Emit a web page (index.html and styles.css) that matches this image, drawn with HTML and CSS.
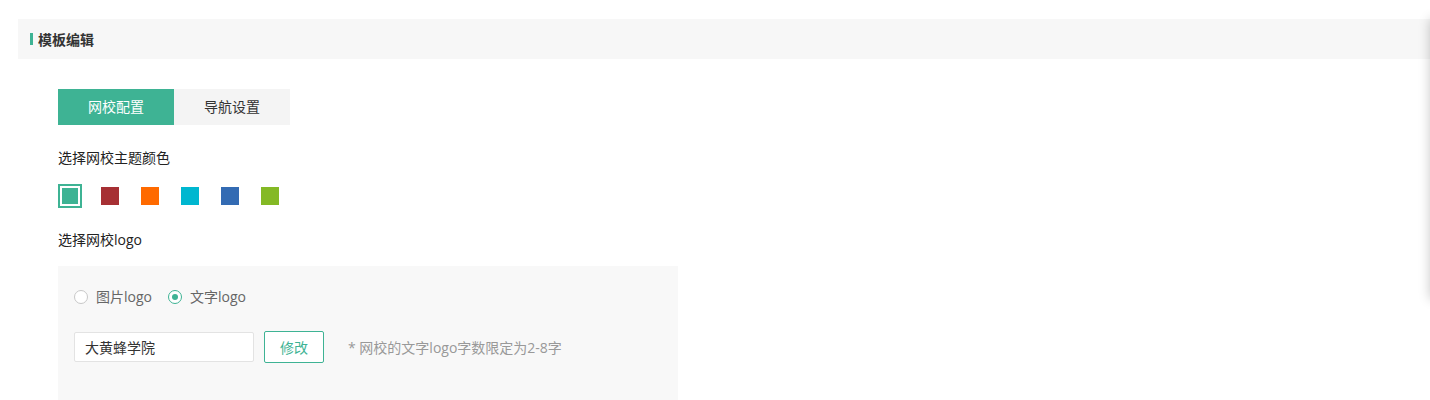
FILE: index.html
```html
<!DOCTYPE html>
<html lang="zh-CN">
  <head>
    <meta charset="UTF-8" />
    <title>模板编辑</title>
    <link rel="stylesheet" href="styles.css">
  </head>
  <body>
    <div class="page">
      <div class="page-head"><span class="mark"></span>模板编辑</div>

      <div class="content">
        <div class="tabs">
          <div class="tab active">网校配置</div>
          <div class="tab">导航设置</div>
        </div>

        <div class="label first">选择网校主题颜色</div>
        <div class="colors">
          <span class="swatch selected"><i style="background:#3eb394"></i></span>
          <span class="swatch"><i style="background:#a63034"></i></span>
          <span class="swatch"><i style="background:#ff6a00"></i></span>
          <span class="swatch"><i style="background:#00b7d0"></i></span>
          <span class="swatch"><i style="background:#336bb3"></i></span>
          <span class="swatch"><i style="background:#84b925"></i></span>
        </div>

        <div class="label">选择网校logo</div>
        <div class="logo-box">
          <div class="radios">
            <label class="radio"><span class="dot"></span>图片logo</label>
            <label class="radio checked"><span class="dot"></span>文字logo</label>
          </div>
          <div class="edit-row">
            <input class="text-input" type="text" value="大黄蜂学院" />
            <button class="edit-btn">修改</button>
            <span class="hint">* 网校的文字logo字数限定为2-8字</span>
          </div>
        </div>
      </div>
    </div>

    <div class="side-shadow"></div>
  </body>
</html>
```

FILE: styles.css
```css
html, body {
  margin: 0;
  padding: 0;
  overflow: hidden;
}
body {
  background: #fff;
  font-family: "Open Sans", "Noto Sans CJK SC", sans-serif;
  font-size: 14px;
  color: #333;
}
.page {
  padding: 19px 0 0 18px;
}
.page-head {
  display: flex;
  align-items: center;
  height: 40px;
  padding-left: 12px;
  background: #f7f7f7;
  font-weight: bold;
  font-size: 14px;
  color: #333;
}
.page-head .mark {
  width: 3px;
  height: 12px;
  margin-right: 5px;
  background: #3eb394;
}
.content {
  padding: 30px 0 0 40px;
}
.tabs {
  display: flex;
}
.tab {
  width: 116px;
  height: 36px;
  line-height: 36px;
  text-align: center;
  font-size: 14px;
  background: #f4f4f4;
  color: #333;
}
.tab.active {
  background: #3eb394;
  color: #fff;
}
.label {
  line-height: 20px;
  margin-top: 22px;
  font-size: 14px;
  color: #222;
}
.label.first {
  margin-top: 23px;
}
.colors {
  display: flex;
  gap: 16px;
  margin-top: 16px;
}
.swatch {
  display: flex;
  align-items: center;
  justify-content: center;
  width: 24px;
  height: 24px;
  box-sizing: border-box;
}
.swatch i {
  display: block;
  width: 18px;
  height: 18px;
}
.swatch.selected {
  border: 2px solid #3eb394;
}
.swatch.selected i {
  width: 18px;
  height: 18px;
  border: 1px solid #fff;
  box-sizing: border-box;
}
.logo-box {
  width: 620px;
  height: 140px;
  margin-top: 16px;
  padding: 21px 16px 0;
  box-sizing: border-box;
  background: #f8f8f8;
}
.radios {
  display: flex;
  gap: 16px;
  line-height: 20px;
  font-size: 14px;
  color: #666;
}
.radio {
  display: flex;
  align-items: center;
}
.radio .dot {
  width: 14px;
  height: 14px;
  margin-right: 8px;
  border: 1px solid #c8c8c8;
  border-radius: 50%;
  background: #fff;
  box-sizing: border-box;
  position: relative;
}
.radio.checked .dot {
  border-color: #3eb394;
}
.radio.checked .dot::after {
  content: "";
  position: absolute;
  left: 3px;
  top: 3px;
  width: 6px;
  height: 6px;
  border-radius: 50%;
  background: #3eb394;
}
.edit-row {
  display: flex;
  align-items: center;
  margin-top: 24px;
}
.text-input {
  width: 180px;
  height: 30px;
  padding: 0 10px;
  box-sizing: border-box;
  border: 1px solid #e3e3e3;
  border-radius: 2px;
  background: #fff;
  font-family: inherit;
  font-size: 14px;
  color: #333;
  outline: none;
}
.edit-btn {
  width: 60px;
  height: 32px;
  margin-left: 10px;
  border: 1px solid #3eb394;
  border-radius: 2px;
  background: #fff;
  color: #3eb394;
  font-family: inherit;
  font-size: 14px;
  cursor: pointer;
}
.hint {
  margin-left: 24px;
  font-size: 14px;
  color: #999;
}
.side-shadow {
  position: fixed;
  top: 19px;
  right: -20px;
  width: 20px;
  height: 280px;
  background: #fff;
  box-shadow: 0 0 12px rgba(0, 0, 0, 0.22);
}
```
